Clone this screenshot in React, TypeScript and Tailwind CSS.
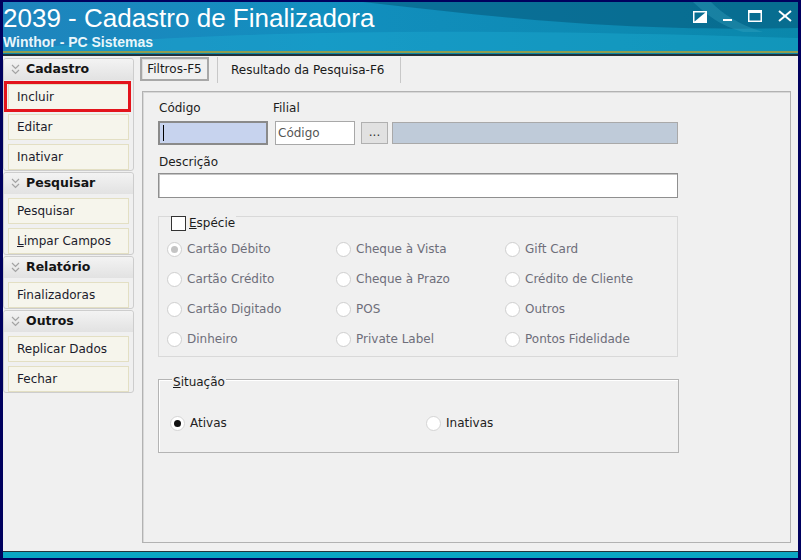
import React from 'react';

const UI = "font-['DejaVu_Sans',sans-serif]";

type Item = { label: React.ReactNode; marked?: boolean };
type Group = { title: string; items: Item[] };

const GROUPS: Group[] = [
  { title: 'Cadastro', items: [{ label: 'Incluir', marked: true }, { label: 'Editar' }, { label: 'Inativar' }] },
  { title: 'Pesquisar', items: [{ label: 'Pesquisar' }, { label: <><span className="underline">L</span>impar Campos</> }] },
  { title: 'Relatório', items: [{ label: 'Finalizadoras' }] },
  { title: 'Outros', items: [{ label: 'Replicar Dados' }, { label: 'Fechar' }] },
];

const ESPECIES = [
  'Cartão Débito', 'Cheque à Vista', 'Gift Card',
  'Cartão Crédito', 'Cheque à Prazo', 'Crédito de Cliente',
  'Cartão Digitado', 'POS', 'Outros',
  'Dinheiro', 'Private Label', 'Pontos Fidelidade',
];

function Chevrons() {
  return (
    <svg width="9" height="11" viewBox="0 0 9 11" fill="none" stroke="#a3a3a3" strokeWidth="1.2">
      <polyline points="1,1 4.5,4.5 8,1" />
      <polyline points="1,6 4.5,9.5 8,6" />
    </svg>
  );
}

function SideGroup({ group }: { group: Group }) {
  return (
    <div className="border border-[#cdcdcd] rounded-[3px] bg-[#f0f0f0]">
      <div className="h-[21px] flex items-center pl-[7px] gap-[6px] rounded-t-[3px] bg-[linear-gradient(180deg,#f3f3f3_0%,#e2e2e2_100%)]">
        <Chevrons />
        <span className={`${UI} text-[12.5px] font-bold text-[#141414]`}>{group.title}</span>
      </div>
      <div className="flex flex-col gap-[4px] pt-[4px] px-[4px]">
        {group.items.map((it, i) => (
          <div key={i} className="relative">
            <div className={`${UI} h-[26px] flex items-center pl-[8px] text-[12px] text-[#1b1b2b] bg-[#f6f5ec] border border-[#e3dfc3]`}>
              {it.label}
            </div>
            {it.marked && (
              <div className="absolute left-[-4px] right-[-2px] top-[-3px] bottom-[-2px] border-[3px] border-[#e3141c]" />
            )}
          </div>
        ))}
      </div>
    </div>
  );
}

function Radio({ label, checked, disabled }: { label: string; checked?: boolean; disabled?: boolean }) {
  return (
    <div className="flex items-center h-[30px]">
      <div className={`w-[15px] h-[15px] rounded-full bg-white border flex items-center justify-center ${disabled ? 'border-[#cfcfcf]' : 'border-[#d4d4d4]'}`}>
        {checked && <div className={`w-[7px] h-[7px] rounded-full ${disabled ? 'bg-[#c4c4c4]' : 'bg-[#111]'}`} />}
      </div>
      <span className={`${UI} ml-[5px] text-[12px] ${disabled ? 'text-[#6e6e7a]' : 'text-[#222]'}`}>{label}</span>
    </div>
  );
}

function WindowButtons() {
  return (
    <div className="flex items-start pt-[8px] pr-[6px] gap-[16px]">
      <svg width="14" height="12" viewBox="0 0 14 12" className="mt-[1px]">
        <rect x="0.75" y="0.75" width="12.5" height="10.5" fill="none" stroke="#fff" strokeWidth="1.5" />
        <polygon points="13,1 13,11 1,11" fill="#fff" />
      </svg>
      <svg width="9" height="12" viewBox="0 0 9 12">
        <rect x="0" y="9" width="9" height="2" fill="#fff" />
      </svg>
      <svg width="14" height="12" viewBox="0 0 14 12">
        <rect x="0.75" y="0.75" width="12.5" height="10.5" fill="none" stroke="#fff" strokeWidth="1.5" />
        <rect x="0" y="0" width="14" height="3" fill="#fff" />
      </svg>
      <svg width="14" height="12" viewBox="0 0 14 12" stroke="#fff" strokeWidth="2">
        <line x1="1" y1="1" x2="13" y2="11" />
        <line x1="13" y1="1" x2="1" y2="11" />
      </svg>
    </div>
  );
}

export default function App() {
  return (
    <div className="w-[801px] h-[560px] bg-[#00005e] pt-[2px] px-[3px] pb-[2px] flex flex-col overflow-hidden">

      {/* Title bar */}
      <div className="relative h-[49px] shrink-0 flex justify-between bg-[linear-gradient(90deg,#1f84bd_0%,#128fbf_40%,#0a87ab_100%)] overflow-hidden">
        <svg className="absolute inset-0" width="795" height="49" viewBox="0 0 795 49" preserveAspectRatio="none">
          <path d="M360 0 C 500 16, 620 30, 795 26 L795 0 Z" fill="#06587a" opacity="0.55" />
          <path d="M0 49 C 180 30, 420 24, 795 36 L795 49 Z" fill="#1fb2d6" opacity="0.35" />
          <path d="M690 0 C 705 14, 718 24, 740 30 L760 30 C 735 22, 720 12, 708 0 Z" fill="#3aa6c4" opacity="0.35" />
        </svg>
        <div className="relative pt-[1px] text-white">
          <div className="font-['Liberation_Sans',Arial,sans-serif] text-[26px] leading-[30px]">2039 - Cadastro de Finalizadora</div>
          <div className="font-['Liberation_Sans',Arial,sans-serif] text-[14px] leading-[16px] font-bold mt-[1px] text-[#e8f6fb]">Winthor - PC Sistemas</div>
        </div>
        <div className="relative">
          <WindowButtons />
        </div>
      </div>
      <div className="h-[2px] shrink-0 bg-[#8e9e52]" />
      <div className="h-[1px] shrink-0 bg-[#0c87a6]" />
      <div className="h-[2px] shrink-0 bg-[#22303a]" />

      {/* Body */}
      <div className="flex-1 flex bg-[#f0f0f0]">

        {/* Side menu */}
        <div className="w-[131px] pt-[2px] flex flex-col gap-[1px]">
          {GROUPS.map(g => <SideGroup key={g.title} group={g} />)}
        </div>

        {/* Main */}
        <div className="flex-1 ml-[6px] pr-[7px] pt-[1px] pb-[8px] flex flex-col">
          <div className={`${UI} flex h-[26px] text-[12px] text-[#1a1a1a]`}>
            <div className="w-[69px] h-[24px] flex items-center justify-center border-2 border-[#a8a8a8] shadow-[inset_1px_1px_0_#dcdcdc]">Filtros-F5</div>
            <div className="ml-[8px] w-[184px] flex items-center pl-[13px] border-l border-r border-[#c8c8c8]">Resultado da Pesquisa-F6</div>
          </div>

          <div className="flex-1 mt-[8px] ml-[2px] border border-[#b2b2b2] shadow-[inset_1px_1px_0_#d8d8d8] pl-[15px] pt-[8px]">
            <div className="w-[520px]">
              {/* Código / Filial */}
              <div className={`${UI} flex items-end text-[12px] text-[#1c1c1c]`}>
                <div className="w-[110px] flex flex-col">
                  <span className="h-[16px] leading-[16px] pl-[1px]">Código</span>
                  <div className="mt-[5px] h-[24px] bg-[#c7d3ee] border-2 border-[#8a8a8a] flex items-center pl-[3px]">
                    <div className="w-[1px] h-[16px] bg-black" />
                  </div>
                </div>
                <div className="ml-[5px] flex flex-col">
                  <span className="h-[16px] leading-[16px]">Filial</span>
                  <div className="mt-[5px] ml-[2px] w-[80px] h-[24px] bg-white border border-[#a8a8a8] flex items-center pl-[2px] text-[#555]">Código</div>
                </div>
                <div className="ml-[6px] mb-[1px] w-[27px] h-[22px] bg-[#e1e1e1] border border-[#b0b0b0] flex items-center justify-center text-[#333] leading-none pb-[3px]">...</div>
                <div className="ml-[4px] mb-[1px] flex-1 h-[22px] bg-[#bfcbd9] border border-[#a9a9a9]" />
              </div>

              {/* Descrição */}
              <div className={`${UI} mt-[9px] text-[12px] text-[#1c1c1c] h-[16px] leading-[16px] pl-[1px]`}>Descrição</div>
              <div className="mt-[3px] h-[25px] bg-white border border-[#8f8f8f] shadow-[inset_1px_1px_0_#c4c4c4]" />

              {/* Espécie */}
              <div className="relative mt-[18px] h-[141px] border border-[#d9d9d9] pt-[17px] pl-[8px]">
                <div className="absolute left-[12px] top-[-2px] flex items-center gap-[3px] bg-[#f0f0f0] pr-[1px]">
                  <div className="w-[15px] h-[15px] bg-white border border-[#333]" />
                  <span className={`${UI} text-[12px] text-[#1c1c1c] leading-[16px]`}><span className="underline">E</span>spécie</span>
                </div>
                <div className="grid grid-cols-[169px_169px_169px]">
                  {ESPECIES.map((e, i) => <Radio key={e} label={e} disabled checked={i === 0} />)}
                </div>
              </div>

              {/* Situação */}
              <div className="relative mt-[22px] h-[74px] w-[521px] border border-[#b4b4b4] shadow-[inset_1px_1px_0_#ffffff] pt-[28px] pl-[11px]">
                <div className={`${UI} absolute left-[13px] top-[-6px] bg-[#f0f0f0] px-[1px] text-[12px] leading-[16px] text-[#1c1c1c]`}>
                  <span className="underline">S</span>ituação
                </div>
                <div className="flex">
                  <div className="w-[256px]"><Radio label="Ativas" checked /></div>
                  <Radio label="Inativas" />
                </div>
              </div>
            </div>
          </div>
        </div>
      </div>

      <div className="h-[1px] shrink-0 bg-[#26343c]" />
      <div className="h-[6px] shrink-0 bg-[#0aa6c4]" />
    </div>
  );
}
